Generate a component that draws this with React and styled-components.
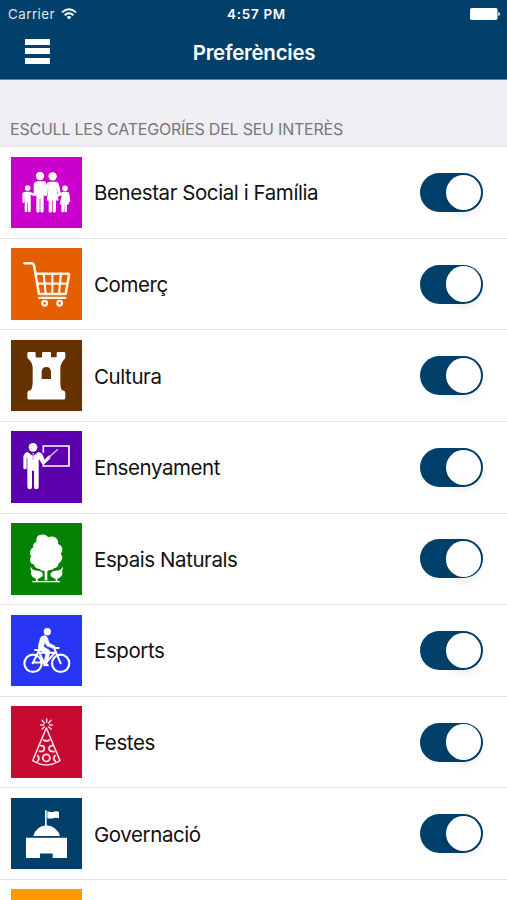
import React, { useState } from 'react';
import styled, { createGlobalStyle } from 'styled-components';

const GlobalStyle = createGlobalStyle`
    :root {
        --navy: #00406a;
        --white: #ffffff;
        --gray: #efeef3;
    }

    * {
        box-sizing: border-box;
    }

    body {
        margin: 0;
        background-color: var(--white);
        font-family: Inter, 'Liberation Sans', sans-serif;
    }
`;

const Screen = styled.div`
    display: flex;
    flex-direction: column;
    width: 100%;
    height: 900px;
    overflow: hidden;
    background-color: var(--white);
`;

const Header = styled.header`
    flex: none;
    height: 79.5px;
    background-color: var(--navy);
    border-bottom: 1px solid #5b87a6;
    color: var(--white);
`;

const StatusBar = styled.div`
    display: grid;
    grid-template-columns: 1fr auto 1fr;
    align-items: center;
    height: 27px;
    padding: 0 7px 0 8px;
    font-size: 13.4px;
`;

const Carrier = styled.div`
    display: flex;
    align-items: center;
    gap: 6px;
    color: #dce8f0;
    letter-spacing: 0.45px;
`;

const Clock = styled.span`
    padding-left: 5px;
    font-weight: 600;
    letter-spacing: 0.75px;
`;

const Battery = styled.svg`
    justify-self: end;
`;

const NavBar = styled.div`
    display: grid;
    grid-template-columns: 1fr auto 1fr;
    align-items: center;
    height: 50px;
    padding: 0 25px;
`;

const MenuButton = styled.button`
    display: flex;
    flex-direction: column;
    justify-content: space-between;
    width: 25px;
    height: 25px;
    margin-bottom: 2px;
    padding: 0;
    border: none;
    background: none;
    cursor: pointer;
`;

const MenuLine = styled.span`
    height: 6px;
    background-color: var(--white);
`;

const Title = styled.h1`
    margin: 0;
    padding-left: 1px;
    font-size: 20.5px;
    font-weight: 600;
    letter-spacing: -0.25px;
`;

const SectionTitle = styled.h2`
    display: flex;
    flex: none;
    align-items: flex-end;
    height: 67.7px;
    margin: 0;
    padding: 0 10px 7px;
    background-color: var(--gray);
    border-bottom: 1px solid #e9e8ed;
    color: #77777c;
    font-size: 16px;
    font-weight: 400;
    line-height: 20px;
    letter-spacing: -0.22px;
`;

const List = styled.ul`
    margin: 0;
    padding: 0;
    list-style: none;
`;

const Row = styled.li`
    display: flex;
    align-items: center;
    height: 91.6px;
    padding: 0 24px 0 11px;
    border-bottom: 1px solid #e3e3e5;
`;

const Tile = styled.div`
    flex: none;
    width: 71px;
    height: 71.6px;
    background-color: ${(props) => props.$color};
`;

const TileIcon = styled.svg`
    display: block;
    width: 100%;
    height: 100%;
`;

const Label = styled.span`
    flex: 1;
    margin-left: 12px;
    padding-top: 1px;
    color: #111;
    font-size: 20.5px;
    letter-spacing: -0.42px;
`;

const Toggle = styled.button`
    display: flex;
    justify-content: ${(props) => (props.$on ? 'flex-end' : 'flex-start')};
    align-items: center;
    width: 63px;
    height: 39px;
    padding: 1.7px;
    border: none;
    border-radius: 20px;
    background-color: ${(props) => (props.$on ? 'var(--navy)' : '#e5e5e5')};
    cursor: pointer;
`;

const Knob = styled.span`
    width: 35.5px;
    height: 35.5px;
    border-radius: 50%;
    background-color: var(--white);
    box-shadow: 0 4px 8px rgba(0, 0, 0, 0.1);
`;

const FamilyIcon = () => (
    <g fill="#fff">
        <circle cx="87" cy="57" r="12.5" />
        <circle cx="125" cy="58" r="12.5" />
        <path d="M77 73h20q9 0 9 10v29q0 5-4 5t-4-5V88v74q0 5-5 5t-5-5v-38h-2v38q0 5-5 5t-5-5V88v24q0 5-4 5t-4-5V84q0-10 9-10z" />
        <path d="M116 74h18q8 0 10 9l6 28q1 5-3 6t-5-4l-6-24 7 42h-8v31q0 5-5 5t-5-5v-31h-2v31q0 5-5 5t-5-5v-31h-6l6-42-5 24q-1 5-5 4t-3-6l6-28q2-9 10-9z" />
        <circle cx="50" cy="93" r="8.5" />
        <circle cx="162" cy="94" r="8.5" />
        <path d="M44 104h12l15 6q4 2 2 5t-6 1l-8-3v49q0 4-4 4t-4-4v-25h-2v25q0 4-4 4t-4-4v-49l-1 21q0 4-3 4t-3-4v-21q0-9 10-9z" />
        <path d="M157 104h11q6 0 7 6l3 22q0 4-3 4t-4-3l-3-17 6 27h-6v20q0 3-4 3t-4-3v-20h-1v20q0 3-4 3t-4-3v-20h-5l6-28-8 3q-4 1-6-2t2-5z" />
    </g>
);

const CartIcon = () => (
    <g fill="none" stroke="#fff4e6" strokeWidth="7.5" strokeLinecap="round" strokeLinejoin="round">
        <path d="M40 46h21q6 0 8 6l15 86h80l10-56q1-5-4-5H75" />
        <path d="M79 107h89M98 78l6 59M124 78v59M150 78l-6 59" strokeWidth="6.5" />
        <path d="M84 150h79" strokeWidth="6.5" />
        <circle cx="101" cy="166" r="7" strokeWidth="6.5" />
        <circle cx="146" cy="166" r="7" strokeWidth="6.5" />
    </g>
);

const TowerIcon = () => (
    <path
        fill="#fff"
        fillRule="evenodd"
        d="M54 36h16q4 0 4 4v12q8 1 19 0V40q0-4 4-4h19q4 0 4 4v12h17V40q0-4 4-4h18q4 0 4 4v14q-12 12-15 26v43q0 22 5 28 10 1 10 8v15q0 5-5 5H54q-5 0-5-5v-15q0-7 10-8 6-7 6-28V80q-3-16-16-26V40q0-4 5-4zM92 117h28V96q-1-15-14-15T92 96z"
    />
);

const TeacherIcon = () => (
    <g>
        <circle cx="66" cy="49" r="13" fill="#fff" />
        <path
            fill="#fff"
            d="M50 63l16 13 16-13q7 1 12 7l7 16 10-11q5-3 7 1 2 3-1 7l-16 15q-6 4-10-2l-8-13v85q0 7-7 7t-7-7v-49h-6v49q0 7-7 7t-7-7V80l-2 2v28q0 5-5 5t-5-5V79q1-14 13-16z"
        />
        <path fill="none" stroke="#fff" strokeWidth="5" d="M97 65V45h77v60H97V94" />
        <path stroke="#d9bfff" strokeWidth="4" strokeLinecap="round" d="M112 80l27-24" />
        <path d="M64 66h5l-1 4 2 14-4 4-3-4 2-14z" fill="#d6c2ef" />
    </g>
);

const TreeIcon = () => (
    <g fill="#fff">
        <path d="M76 47q3-13 17-12 13-1 18 8 16-6 27 5 6 8 3 15 14 5 13 17 0 8-5 12 8 9 3 19-3 8-9 10-1 13-14 15-5 7-13 5l-7 3v28h-8v-28q-10 1-15-6-15 0-17-13-12-3-12-15 0-6 4-10-7-7-3-17 3-8 8-9-1-13 10-17z" />
        <path d="M59 130q3 11 15 13 17 0 21 9 3 10-10 14l-5 2v6h-5v-6q-11-3-14-12-3-5 0-9-4-8-2-17z" />
        <path d="M155 130q-3 11-15 13-17 0-21 9-3 10 10 14l5 2v6h5v-6q11-3 14-12 3-5 0-9 4-8 2-17z" />
        <path d="M64 174h83v4H64z" />
    </g>
);

const BikeIcon = () => (
    <g fill="none" stroke="#fff" strokeLinecap="round" strokeLinejoin="round">
        <circle cx="109" cy="50" r="11" fill="#fff" stroke="none" />
        <circle cx="66" cy="145" r="26" strokeWidth="6.5" />
        <circle cx="149" cy="145" r="26" strokeWidth="6.5" />
        <path d="M65 145l18-36 16 34h-34M84 113h48l-29 32M129 98l20 47M129 98l14 1M72 105h19" strokeWidth="6" />
        <path
            d="M85 104q-5-4-3-12l6-22q4-9 13-8 7 0 9 8l5 15 15 7q4 3 2 6-2 4-7 2l-17-7-7-11-3 13 16 10q5 5 2 12l-8 29 5 4q1 2-2 3h-12q-3-1-2-4l7-31z"
            fill="#fff"
            stroke="#fff"
            strokeWidth="1.5"
        />
    </g>
);

const PartyHatIcon = () => (
    <g fill="none" stroke="#ffe0e7" strokeWidth="4.5" strokeLinecap="round" strokeLinejoin="round">
        <path d="M106 66L65 164q41 26 82 0z" />
        <path d="M107 49V39M113 51l7-8M116 57h8M113 63l8 6M100 51l-7-8M98 57H89M100 63l-7 6" strokeWidth="4.5" />
        <circle cx="106" cy="156" r="10.5" strokeWidth="5.5" />
        <path d="M98 102q8 6 17 0M89 119q11-1 11 9t-14 8M126 118q-12 1-12 10t15 9M80 149q7 8 0 17M132 149q-8 9 1 17" strokeWidth="5.5" />
    </g>
);

const CityHallIcon = () => (
    <g fill="#fff">
        <path d="M102 37h5v49h-5z" />
        <path d="M109 40q10 4 19 1 7-3 16 0v20q-10-3-17 0-9 3-18 0z" />
        <path d="M67 114q8-29 39-32 32 3 41 32z" />
        <path d="M45 119h123v61h-43v-13H87v13H45z" />
    </g>
);

const categories = [
    { name: 'Benestar Social i Família', color: '#cc00cc', Icon: FamilyIcon },
    { name: 'Comerç', color: '#e55f00', Icon: CartIcon },
    { name: 'Cultura', color: '#663300', Icon: TowerIcon },
    { name: 'Ensenyament', color: '#5a00ad', Icon: TeacherIcon },
    { name: 'Espais Naturals', color: '#048204', Icon: TreeIcon },
    { name: 'Esports', color: '#2935f4', Icon: BikeIcon },
    { name: 'Festes', color: '#c80a32', Icon: PartyHatIcon },
    { name: 'Governació', color: '#00406a', Icon: CityHallIcon },
    { name: '', color: '#ff9900', Icon: null },
];

const CategoryRow = ({ category }) => {
    const [on, setOn] = useState(true);
    const { name, color, Icon } = category;

    return (
        <Row>
            <Tile $color={color}>
                {Icon && (
                    <TileIcon viewBox="0 0 213 215">
                        <Icon />
                    </TileIcon>
                )}
            </Tile>
            <Label>{name}</Label>
            {name && (
                <Toggle $on={on} onClick={() => setOn(!on)}>
                    <Knob />
                </Toggle>
            )}
        </Row>
    );
};

const App = () => {
    return (
        <>
            <GlobalStyle />
            <Screen>
                <Header>
                    <StatusBar>
                        <Carrier>
                            Carrier
                            <svg width="16" height="12" viewBox="0 0 16 12" fill="none" stroke="#fff" strokeWidth="1.9">
                                <path d="M1 4.4q7-6.2 14 0M3.6 7.2q4.4-3.8 8.8 0" />
                                <path d="M5.6 9q2.4-1.8 4.8 0L8 11.4z" fill="#fff" stroke="none" />
                            </svg>
                        </Carrier>
                        <Clock>4:57 PM</Clock>
                        <Battery width="30" height="12" viewBox="0 0 30 12" fill="#fff">
                            <rect x="0" y="0" width="27.5" height="12" rx="1.8" />
                            <path d="M28.3 4q1.7.4 1.7 2t-1.7 2z" />
                        </Battery>
                    </StatusBar>
                    <NavBar>
                        <MenuButton>
                            <MenuLine />
                            <MenuLine />
                            <MenuLine />
                        </MenuButton>
                        <Title>Preferències</Title>
                    </NavBar>
                </Header>
                <SectionTitle>ESCULL LES CATEGORÍES DEL SEU INTERÈS</SectionTitle>
                <List>
                    {categories.map((category) => (
                        <CategoryRow key={category.color} category={category} />
                    ))}
                </List>
            </Screen>
        </>
    );
};

export default App;
